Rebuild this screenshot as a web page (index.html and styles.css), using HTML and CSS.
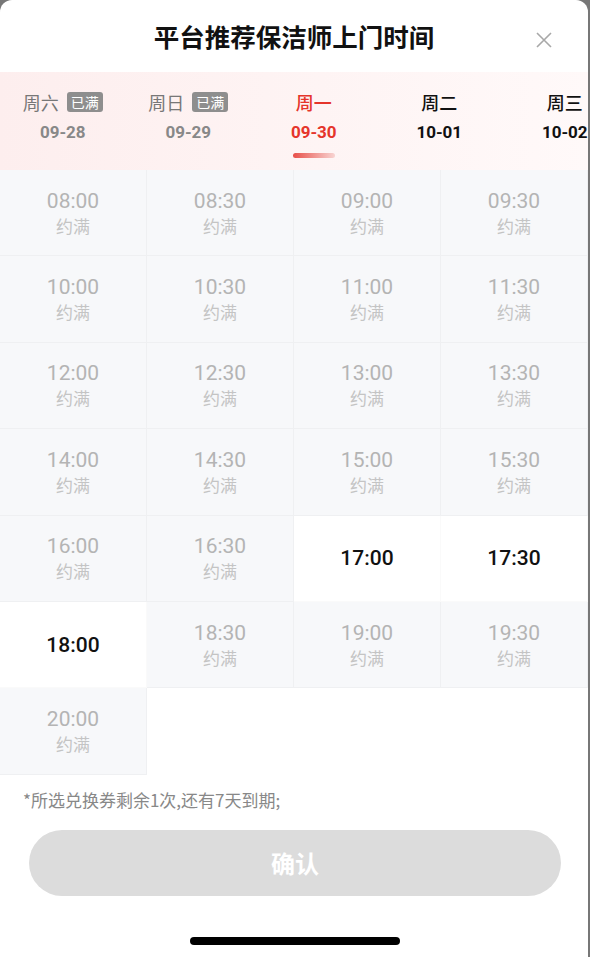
FILE: index.html
```html
<!DOCTYPE html>
<html lang="zh-CN">
<head>
    <meta charset="UTF-8">
    <meta name="viewport" content="width=device-width, initial-scale=1.0">
    <title>平台推荐保洁师上门时间</title>
    <link rel="stylesheet" href="styles.css">
</head>
<body>
    <div class="sheet">
        <!-- 标题 -->
        <div class="header">
            <h1 class="title">平台推荐保洁师上门时间</h1>
            <span class="close">
                <svg width="16" height="16" viewBox="0 0 16 16">
                    <path d="M1 1 L15 15 M15 1 L1 15" stroke="#a8a8a8" stroke-width="1.6" fill="none"/>
                </svg>
            </span>
        </div>

        <!-- 日期 -->
        <div class="days">
            <div class="day full">
                <div class="dayName">周六 <span class="badge">已满</span></div>
                <div class="dayDate">09-28</div>
            </div>
            <div class="day full">
                <div class="dayName">周日 <span class="badge">已满</span></div>
                <div class="dayDate">09-29</div>
            </div>
            <div class="day active">
                <div class="dayName">周一</div>
                <div class="dayDate">09-30</div>
                <div class="bar"></div>
            </div>
            <div class="day">
                <div class="dayName">周二</div>
                <div class="dayDate">10-01</div>
            </div>
            <div class="day">
                <div class="dayName">周三</div>
                <div class="dayDate">10-02</div>
            </div>
        </div>

        <!-- 时间 -->
        <div class="slots">
            <div class="slot"><span class="time">08:00</span><span class="state">约满</span></div>
            <div class="slot"><span class="time">08:30</span><span class="state">约满</span></div>
            <div class="slot"><span class="time">09:00</span><span class="state">约满</span></div>
            <div class="slot"><span class="time">09:30</span><span class="state">约满</span></div>
            <div class="slot"><span class="time">10:00</span><span class="state">约满</span></div>
            <div class="slot"><span class="time">10:30</span><span class="state">约满</span></div>
            <div class="slot"><span class="time">11:00</span><span class="state">约满</span></div>
            <div class="slot"><span class="time">11:30</span><span class="state">约满</span></div>
            <div class="slot"><span class="time">12:00</span><span class="state">约满</span></div>
            <div class="slot"><span class="time">12:30</span><span class="state">约满</span></div>
            <div class="slot"><span class="time">13:00</span><span class="state">约满</span></div>
            <div class="slot"><span class="time">13:30</span><span class="state">约满</span></div>
            <div class="slot"><span class="time">14:00</span><span class="state">约满</span></div>
            <div class="slot"><span class="time">14:30</span><span class="state">约满</span></div>
            <div class="slot"><span class="time">15:00</span><span class="state">约满</span></div>
            <div class="slot"><span class="time">15:30</span><span class="state">约满</span></div>
            <div class="slot"><span class="time">16:00</span><span class="state">约满</span></div>
            <div class="slot"><span class="time">16:30</span><span class="state">约满</span></div>
            <div class="slot open"><span class="time">17:00</span></div>
            <div class="slot open"><span class="time">17:30</span></div>
            <div class="slot open"><span class="time">18:00</span></div>
            <div class="slot"><span class="time">18:30</span><span class="state">约满</span></div>
            <div class="slot"><span class="time">19:00</span><span class="state">约满</span></div>
            <div class="slot"><span class="time">19:30</span><span class="state">约满</span></div>
            <div class="slot"><span class="time">20:00</span><span class="state">约满</span></div>
        </div>

        <p class="note">*所选兑换券剩余1次,还有7天到期;</p>

        <button class="confirm">确认</button>

        <div class="homeBar"></div>
    </div>
</body>
</html>
```

FILE: styles.css
```css
body {
    margin: 0;
    background-color: #777;
    font-family: Roboto, "Noto Sans CJK SC", sans-serif;
}

.sheet {
    width: 588px;
    height: 957px;
    background-color: white;
    border-radius: 12px 12px 0 0;
    overflow: hidden;
}

.header {
    height: 72px;
    display: flex;
    justify-content: center;
    align-items: center;
    position: relative;
}

.title {
    margin: 0;
    font-family: "Noto Sans CJK SC", sans-serif;
    font-size: 25.5px;
    font-weight: bold;
    color: #111;
    margin-top: -2px;
}

.close {
    position: absolute;
    right: 36px;
    top: 32px;
    width: 16px;
    height: 16px;
}

.days {
    height: 98px;
    display: flex;
    background: linear-gradient(90deg, #fdeeee, #fff9f9);
    white-space: nowrap;
}

.day {
    flex: 0 0 125.5px;
    display: flex;
    flex-direction: column;
    align-items: center;
    padding-top: 17px;
    box-sizing: border-box;
}

.dayName {
    font-family: "Noto Sans CJK SC", sans-serif;
    font-size: 18px;
    font-weight: 500;
    line-height: 26px;
    color: #111;
    display: flex;
    align-items: center;
    gap: 8px;
}

.dayDate {
    font-size: 17px;
    font-weight: bold;
    line-height: 20px;
    margin-top: 7px;
    color: #111;
}

.badge {
    background-color: #8e8e8e;
    color: white;
    font-size: 14px;
    font-weight: normal;
    line-height: 20px;
    padding: 0 4px;
    border-radius: 3px;
}

.full .dayName {
    color: #777;
    font-weight: normal;
}

.full .dayDate {
    color: #888;
}

.active .dayName,
.active .dayDate {
    color: #e5352b;
}

.bar {
    width: 42px;
    height: 5px;
    margin-top: 11px;
    border-radius: 3px;
    background: linear-gradient(90deg, #e8504a, #f8d4d2);
}

.slots {
    display: grid;
    grid-template-columns: repeat(4, 1fr);
    grid-auto-rows: 86.4px;
}

.slot {
    background-color: #f7f8fa;
    border-right: 1px solid #eff0f2;
    border-bottom: 1px solid #eff0f2;
    display: flex;
    flex-direction: column;
    justify-content: center;
    align-items: center;
}

.time {
    font-size: 21px;
    line-height: 26px;
    color: #b4b4b4;
}

.state {
    font-family: "Noto Sans CJK SC", sans-serif;
    font-size: 17px;
    line-height: 24px;
    color: #c4c4c4;
}

.open {
    background-color: white;
    border-color: #fafafa;
}

.open .time {
    color: #111;
    font-weight: 500;
}

.note {
    margin: 16px 0 0 23px;
    font-family: "Noto Sans CJK SC", sans-serif;
    font-size: 17px;
    line-height: 18px;
    color: #888;
}

.confirm {
    display: block;
    width: 532px;
    height: 66px;
    margin: 21px 0 0 29px;
    border: none;
    border-radius: 33px;
    background-color: #dcdcdc;
    color: white;
    font-family: "Noto Sans CJK SC", sans-serif;
    font-size: 24px;
    font-weight: bold;
}

.homeBar {
    width: 210px;
    height: 8px;
    margin: 41px 0 0 190px;
    border-radius: 4px;
    background-color: #000;
}
```
